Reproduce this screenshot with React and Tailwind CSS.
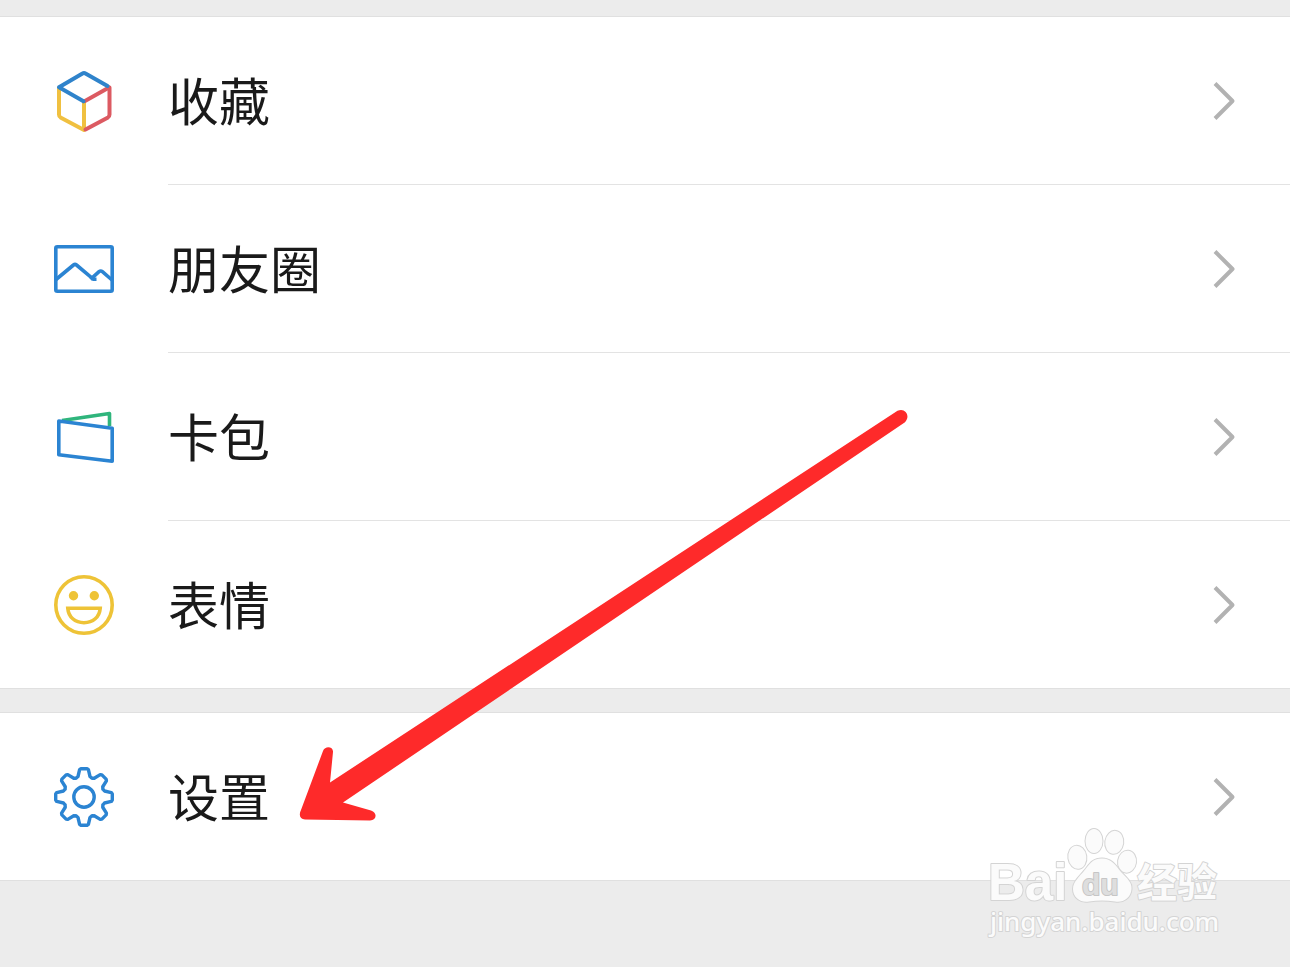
import React from 'react';

const CubeIcon = () => (
  <svg viewBox="0 0 64 64" className="h-16 w-16 shrink-0" fill="none" strokeWidth="4" strokeLinejoin="round" strokeLinecap="round" aria-hidden="true">
    <path d="M7 19V45.500Q7 47.500 8.500 48.400L32 61V33" stroke="#f0c040" />
    <path d="M57.500 18.500V45.500Q57.500 47.500 56 48.400L33.500 60.500" stroke="#dc5a62" />
    <path d="M33 32L57 18.500" stroke="#dc5a62" />
    <path d="M31.500 32.300L7 18.300L30.500 4.500Q32 3.500 33.500 4.500L55.500 17" stroke="#2f83cb" />
  </svg>
);

const PictureIcon = () => (
  <svg viewBox="0 0 64 64" className="h-16 w-16 shrink-0" fill="none" stroke="#2b84d2" strokeWidth="3.6" aria-hidden="true">
    <rect x="3.800" y="9.800" width="56.400" height="44.400" rx="1.500" />
    <path d="M4 42.500L21.500 28Q23 26.800 24.500 28L41.500 42.300H44.500" />
    <path d="M38.500 42.300L47 34.700Q48.700 33.300 50.400 34.700L60 43" />
  </svg>
);

const WalletIcon = () => (
  <svg viewBox="0 0 64 64" className="h-16 w-16 shrink-0" fill="none" strokeWidth="3.6" strokeLinejoin="round" aria-hidden="true">
    <path d="M10 15.500L57.500 8.500V21" stroke="#2fb57c" />
    <path d="M6.800 16L60.200 23.200V56.200L6.800 49.800Z" stroke="#2b84d2" />
  </svg>
);

const SmileIcon = () => (
  <svg viewBox="0 0 64 64" className="h-16 w-16 shrink-0" fill="none" stroke="#eec337" strokeWidth="3.6" aria-hidden="true">
    <circle cx="32" cy="32" r="28.200" />
    <circle cx="21.500" cy="22.800" r="4.700" fill="#eec337" stroke="none" />
    <circle cx="42.300" cy="22.800" r="4.700" fill="#eec337" stroke="none" />
    <path d="M15.800 35.300H48.200C47.500 44 41 49.700 32 49.700S16.500 44 15.800 35.300Z" />
  </svg>
);

// one tooth of the gear, repeated every 45 degrees
const tooth = [[-8, -18.8], [-6, -20.5], [-4.4, -27.3], [-3, -28.3], [3, -28.3], [4.4, -27.3], [6, -20.5], [8, -18.8]];

const gearPoints = Array.from({ length: 8 }, (_, i) => {
  const a = (i * Math.PI) / 4;
  return tooth
    .map(([x, y]) => {
      const px = 32 + x * Math.cos(a) - y * Math.sin(a);
      const py = 32 + x * Math.sin(a) + y * Math.cos(a);
      return `${px.toFixed(2)},${py.toFixed(2)}`;
    })
    .join(' ');
}).join(' ');

const GearIcon = () => (
  <svg viewBox="0 0 64 64" className="h-16 w-16 shrink-0" fill="none" stroke="#2b84d2" strokeWidth="3.4" strokeLinejoin="round" aria-hidden="true">
    <polygon points={gearPoints} />
    <circle cx="32" cy="32" r="10.200" />
  </svg>
);

const Chevron = () => (
  <svg viewBox="0 0 24 40" className="h-10 w-6 shrink-0" fill="none" stroke="#b2b2b2" strokeWidth="4" aria-hidden="true">
    <path d="M3 2.500L20.500 20L3 37.500" strokeLinejoin="round" />
  </svg>
);

const MenuRow = ({ icon, label, last }) => (
  <li>
    <button
      type="button"
      className={`flex h-42 w-full items-stretch gap-[52px] pl-[52px] text-left ${last ? 'border-b border-[#e0e0e0]' : ''}`}
    >
      <span className="flex items-center">{icon}</span>
      <span className={`flex flex-1 items-center justify-between pr-[54px] ${last ? '' : 'border-b border-[#e3e3e3]'}`}>
        <span className="pb-0.5 text-[51px] leading-none text-[#1a1a1a]">{label}</span>
        <Chevron />
      </span>
    </button>
  </li>
);

const items = [
  { label: '收藏', icon: <CubeIcon /> },
  { label: '朋友圈', icon: <PictureIcon /> },
  { label: '卡包', icon: <WalletIcon /> },
  { label: '表情', icon: <SmileIcon /> },
];

const Arrow = () => (
  <svg viewBox="290 400 630 430" className="pointer-events-none absolute left-[290px] top-[400px] h-[430px] w-[630px]" fill="#fe2a2a" aria-hidden="true">
    <path d="M330 782.500L897.500 410.800C905 407 911 416 905 422.200L343 802.500L371 810.500C377.500 812.500 377 820 370 820.500L305 819.500C300 819 298.500 815 301 810L323 751C325 745.500 333.500 746.500 333 752Z" />
  </svg>
);

const Watermark = () => (
  <svg
    viewBox="980 820 250 125"
    className="pointer-events-none absolute -top-[61px] right-[60px] h-[125px] w-[250px]"
    fill="#fbfbfb"
    stroke="#d4d4d4"
    strokeWidth="2"
    strokeLinejoin="round"
    paintOrder="stroke"
  >
    <g className="font-['Liberation_Sans','Noto_Sans_CJK_SC',sans-serif] font-bold">
      <text x="988" y="900" fontSize="51">Bai</text>
      <text x="1137" y="897" fontSize="40">经验</text>
    </g>
    <ellipse cx="1077.300" cy="857.300" rx="9" ry="11.500" transform="rotate(-8 1077 857)" />
    <ellipse cx="1094" cy="841" rx="8.500" ry="12" />
    <ellipse cx="1114.300" cy="842.300" rx="9" ry="11.500" transform="rotate(8 1114 842)" />
    <ellipse cx="1127" cy="861.700" rx="9" ry="11" transform="rotate(8 1127 862)" />
    <path d="M1102 858.500C1112 858.500 1116 866 1121 872C1128 879 1132 883 1131.500 889C1131 898 1123 903 1115 901.500C1106 900 1098 900 1089 901.500C1081 903 1073 898 1073 889C1073 882 1079 877 1084 871C1089 865 1092 858.500 1102 858.500Z" />
    <text x="1082" y="895" fontSize="30" fill="#dedede" stroke="#c6c6c6" className="font-['Liberation_Sans',sans-serif] font-bold">du</text>
    <text x="990" y="931" fontSize="26" className="font-['Noto_Sans',sans-serif] font-medium">jingyan.baidu.com</text>
  </svg>
);

const App = () => {
  return (
    <main className="relative flex min-h-screen flex-col overflow-hidden bg-[#ececec] font-['Noto_Sans_CJK_SC',sans-serif]">
      <div className="h-[17px] border-b border-[#e0e0e0]" />

      <ul className="bg-white">
        {items.map((item, index) => (
          <MenuRow key={item.label} icon={item.icon} label={item.label} last={index === items.length - 1} />
        ))}
      </ul>

      <div className="h-6 border-b border-[#e0e0e0]" />

      <ul className="bg-white">
        <MenuRow icon={<GearIcon />} label="设置" last />
      </ul>

      <footer className="relative flex-1">
        <Watermark />
      </footer>

      <Arrow />
    </main>
  );
};

export default App;
